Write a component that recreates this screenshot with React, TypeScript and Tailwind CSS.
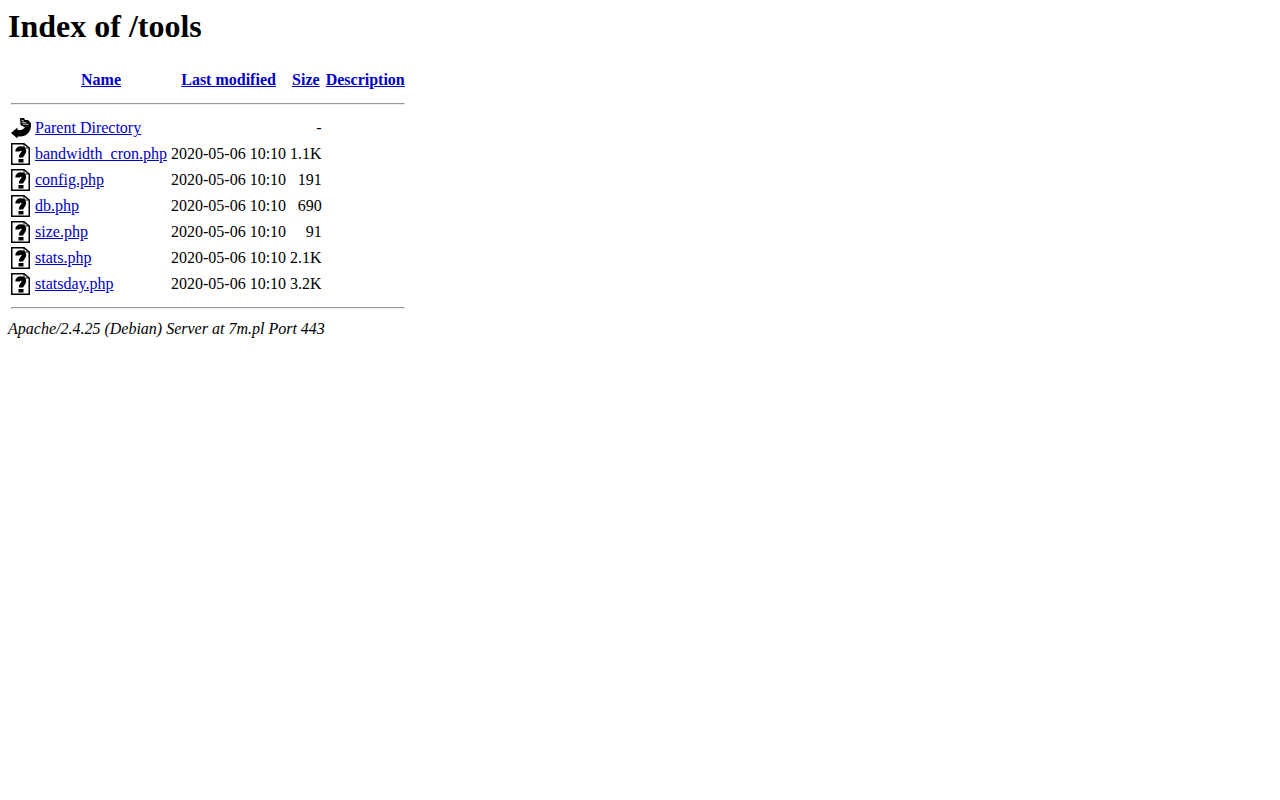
const files = [
  { name: "bandwidth_cron.php", size: "1.1K" },
  { name: "config.php", size: "191" },
  { name: "db.php", size: "690" },
  { name: "size.php", size: "91" },
  { name: "stats.php", size: "2.1K" },
  { name: "statsday.php", size: "3.2K" },
];

const BackIcon = () => (
  <svg width="20" height="22" viewBox="0 0 20 22" className="block" fill="none">
    <path d="M0 16 L6.5 10.5 L6.5 13 C10 13.5 13 12.5 14 10 L20 8.5 C20 15 15 20 8 19.5 L6.5 19.5 L6.5 21.5 Z" fill="#000" />
    <path d="M9 1 L13 1 L14 3 L17 3 L20 6 L20 9 L13 10 L9.5 8 Z" fill="#000" />
    <path d="M10.5 3 L13 4 M10.5 5 L15.5 6 M11.5 7 L17.5 7.5" stroke="#bbb" strokeWidth="1" />
  </svg>
);

const UnknownIcon = () => (
  <svg width="20" height="22" viewBox="0 0 20 22" className="block" fill="none">
    <path d="M0.75 0.75 H13 L18.25 5 V21.25 H0.75 Z" fill="#fff" stroke="#000" strokeWidth="1.5" />
    <path d="M13 1 V5 H18" stroke="#000" fill="none" />
    <path d="M6.5 8.5 C6.5 4.5 13 4.5 13 8 C13 10.5 10 11 10 14.5" stroke="#000" strokeWidth="4.5" fill="none" />
    <rect x="7.5" y="16" width="5" height="3.5" fill="#000" />
  </svg>
);

const Rule = () => (
  <tr>
    <th colSpan={5} className="p-px">
      <hr className="my-2 border border-solid border-t-[#9a9a9a] border-l-[#9a9a9a] border-r-[#eeeeee] border-b-[#eeeeee] h-0.5" />
    </th>
  </tr>
);

export default function App() {
  return (
    <div className="min-h-screen bg-white p-2 font-['Liberation_Serif',serif] text-base leading-[normal] text-black">
      <h1 className="mb-[21.44px] text-[32px] font-bold">Index of /tools</h1>
      <table className="border-separate border-spacing-[2px]">
        <tbody>
          <tr>
            <th className="h-6 w-[22px] p-px"></th>
            <th className="p-px font-bold"><a href="#" className="text-[#0000cc] underline">Name</a></th>
            <th className="p-px font-bold"><a href="#" className="text-[#0000cc] underline">Last modified</a></th>
            <th className="p-px font-bold"><a href="#" className="text-[#0000cc] underline">Size</a></th>
            <th className="p-px font-bold"><a href="#" className="text-[#0000cc] underline">Description</a></th>
          </tr>
          <Rule />
          <tr>
            <td className="p-px align-top"><BackIcon /></td>
            <td className="p-px"><a href="#" className="text-[#0000cc] underline">Parent Directory</a></td>
            <td className="p-px">&nbsp;</td>
            <td className="p-px text-right">-</td>
            <td className="p-px">&nbsp;</td>
          </tr>
          {files.map((f) => (
            <tr key={f.name}>
              <td className="p-px align-top"><UnknownIcon /></td>
              <td className="p-px"><a href="#" className="text-[#0000cc] underline">{f.name}</a></td>
              <td className="p-px text-right">2020-05-06 10:10</td>
              <td className="p-px text-right">{f.size}</td>
              <td className="p-px">&nbsp;</td>
            </tr>
          ))}
          <Rule />
        </tbody>
      </table>
      <address className="italic">Apache/2.4.25 (Debian) Server at 7m.pl Port 443</address>
    </div>
  );
}
